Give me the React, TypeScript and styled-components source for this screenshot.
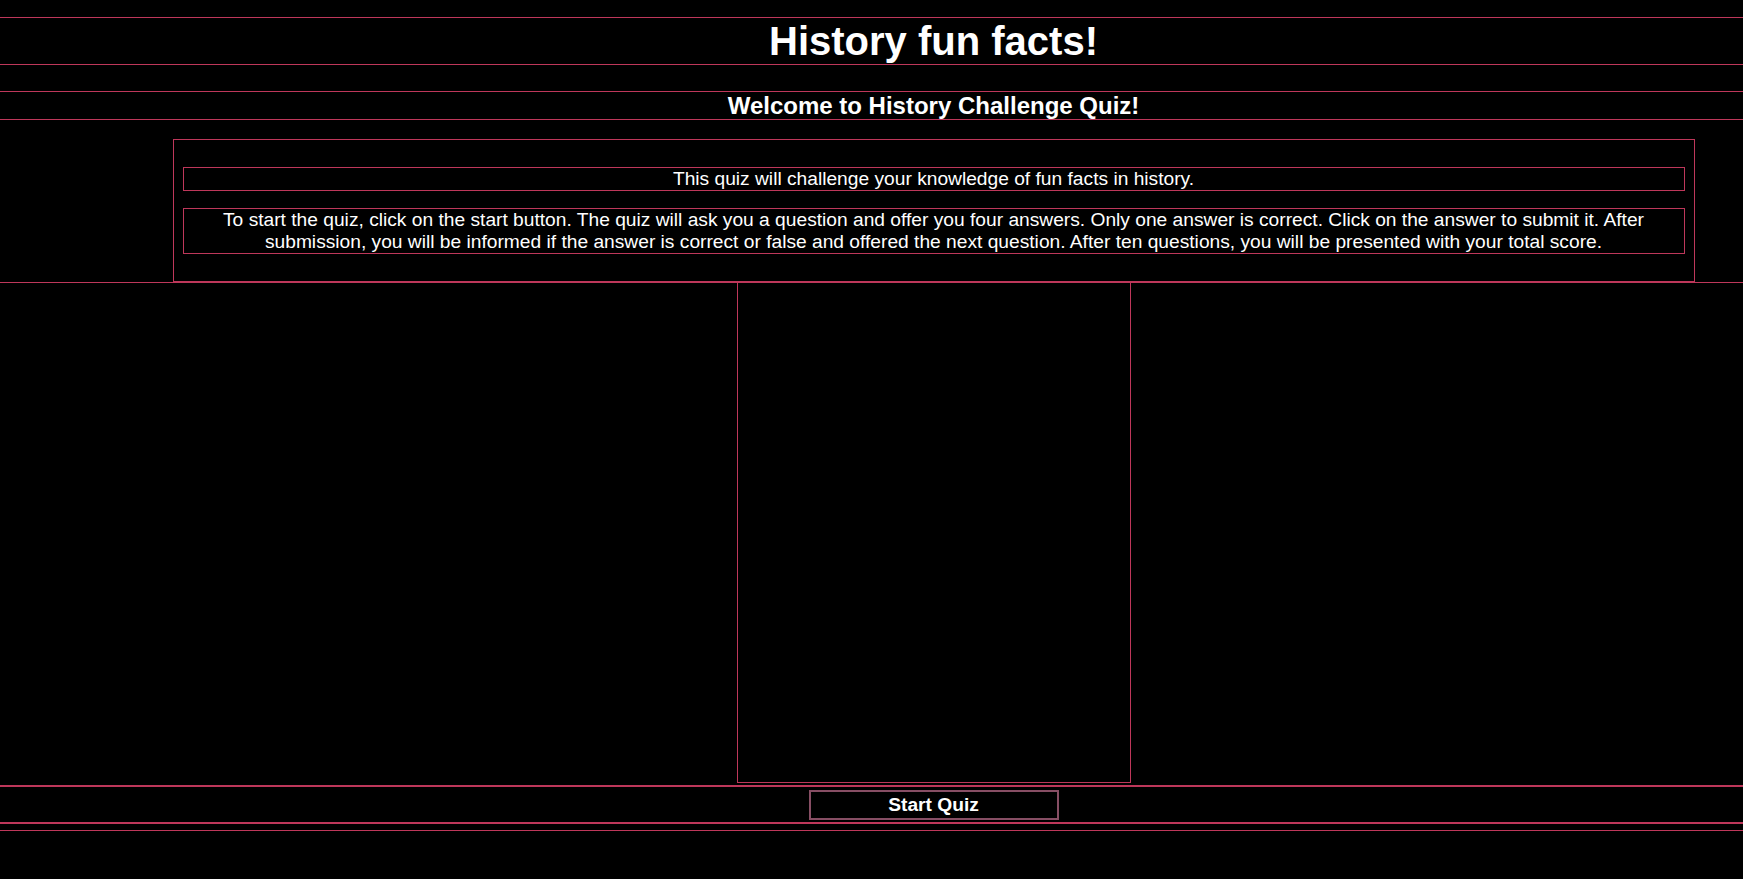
import React from 'react';
import styled, { createGlobalStyle } from 'styled-components';

const lineColor = 'rgb(190, 55, 90)';

const GlobalStyle = createGlobalStyle`
  html, body {
    margin: 0;
    padding: 0;
    background: #000;
    overflow-x: hidden;
  }
  body {
    font-family: "Liberation Sans", Arial, sans-serif;
    color: #fff;
  }
`;

// the page is laid out a little wider than the window, so everything sits right of centre
const Page = styled.div`
  width: 1867px;
  min-height: 879px;
  padding-top: 17px;
  box-sizing: border-box;
`;

const Title = styled.h1`
  margin: 0 0 26px;
  border-top: 1px solid ${lineColor};
  border-bottom: 1px solid ${lineColor};
  font-size: 40px;
  line-height: 46px;
  font-weight: bold;
  text-align: center;
`;

const SubTitle = styled.h2`
  margin: 0;
  border-top: 1px solid ${lineColor};
  border-bottom: 1px solid ${lineColor};
  font-size: 24px;
  line-height: 27px;
  font-weight: bold;
  text-align: center;
`;

const IntroSection = styled.section`
  padding-top: 19px;
  border-bottom: 1px solid ${lineColor};
`;

const IntroBox = styled.div`
  width: 1522px;
  margin: 0 auto;
  box-sizing: border-box;
  border: 1px solid ${lineColor};
  padding: 10px 9px;
`;

const IntroText = styled.p`
  margin: 17px 0;
  border: 1px solid ${lineColor};
  font-size: 19.2px;
  line-height: 22px;
  text-align: center;
`;

const QuizArea = styled.div`
  width: 394px;
  height: 500px;
  margin: 0 auto;
  box-sizing: border-box;
  border: 1px solid ${lineColor};
  border-top: none;
`;

const ButtonRow = styled.div`
  margin-top: 2px;
  padding: 3px 0 2px;
  border-top: 2px solid ${lineColor};
  border-bottom: 2px solid ${lineColor};
  display: flex;
  justify-content: center;
`;

const StartButton = styled.button`
  width: 250px;
  height: 30px;
  box-sizing: border-box;
  padding: 0;
  background: #000;
  border: 2px solid rgb(135, 78, 100);
  color: #fff;
  font-family: "Liberation Sans", Arial, sans-serif;
  font-size: 19.2px;
  font-weight: bold;
  line-height: 22px;
  cursor: pointer;
`;

const Footer = styled.footer`
  margin-top: 6px;
  border-top: 1px solid ${lineColor};
`;

export default function App() {
  return (
    <>
      <GlobalStyle />
      <Page>
        <Title>History fun facts!</Title>
        <SubTitle>Welcome to History Challenge Quiz!</SubTitle>
        <IntroSection>
          <IntroBox>
            <IntroText>This quiz will challenge your knowledge of fun facts in history.</IntroText>
            <IntroText>
              To start the quiz, click on the start button. The quiz will ask you a question and offer
              you four answers. Only one answer is correct. Click on the answer to submit it. After
              submission, you will be informed if the answer is correct or false and offered the next
              question. After ten questions, you will be presented with your total score.
            </IntroText>
          </IntroBox>
        </IntroSection>
        <QuizArea />
        <ButtonRow>
          <StartButton>Start Quiz</StartButton>
        </ButtonRow>
        <Footer />
      </Page>
    </>
  );
}
